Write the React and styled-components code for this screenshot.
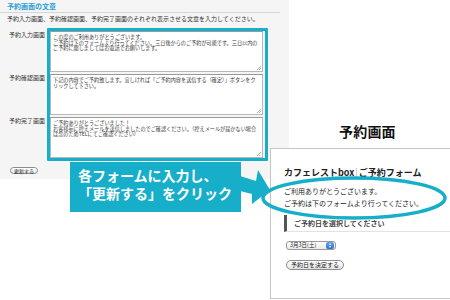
import React from 'react';
import styled, { createGlobalStyle } from 'styled-components';

const cyan = '#17aeca';
const jp = '"Noto Sans CJK JP", "Noto Sans", sans-serif';

const GlobalStyle = createGlobalStyle`
  html, body {
    margin: 0;
    padding: 0;
    background: #fff;
  }
  body {
    font-family: ${jp};
  }
`;

const Canvas = styled.div`
  position: relative;
  width: 450px;
  height: 300px;
  overflow: hidden;
  background: #fff;
`;

/* 管理画面 (left) */
const AdminPage = styled.div`
  box-sizing: border-box;
  width: 289px;
  height: 179px;
  padding: 0 9px 0 0;
  background: #f5f5f5;
  color: #333;
`;

const SectionTitle = styled.div`
  padding: 2px 0 2px 7px;
  border-bottom: 1px solid #d6d6d6;
  color: #2a9ed6;
  font-size: 7px;
  line-height: 8px;
  font-weight: bold;
`;

const Intro = styled.p`
  margin: 2px 0 0;
  padding-left: 7px;
  font-size: 6px;
  line-height: 7px;
  white-space: nowrap;
`;

const FormArea = styled.div`
  display: flex;
  margin-top: 6px;
  padding-left: 7px;
`;

const LabelCol = styled.div`
  display: flex;
  flex-direction: column;
  width: 40px;
  padding-top: 3.5px;
`;

const Label = styled.div`
  height: 43px;
  padding-right: 2px;
  text-align: right;
  font-size: 6px;
  line-height: 6px;
  white-space: nowrap;
`;

const Highlight = styled.div`
  display: flex;
  flex-direction: column;
  gap: 2px;
  padding: 0 2px 0 0;
  border: 3px solid ${cyan};
  border-radius: 1px;
  background: #f5f5f5;
`;

/* textarea の見た目 */
const Field = styled.div`
  position: relative;
  box-sizing: border-box;
  width: 213px;
  height: 41px;
  padding: 2px 2px 1px;
  border: 1px solid #b8b8b8;
  border-top-color: #999;
  background: #fff;
  color: #3a3a3a;
  font-size: 5.15px;
  line-height: 5.7px;
  white-space: pre;
  overflow: hidden;

  &::after {
    content: '';
    position: absolute;
    right: 1px;
    bottom: 1px;
    width: 4px;
    height: 4px;
    background: linear-gradient(
      135deg,
      transparent 45%,
      #b0b0b0 45%,
      #b0b0b0 55%,
      transparent 55%,
      transparent 75%,
      #b0b0b0 75%,
      #b0b0b0 85%,
      transparent 85%
    );
  }
`;

const PillButton = styled.div`
  display: flex;
  width: fit-content;
  align-items: center;
  justify-content: center;
  box-sizing: border-box;
  height: ${(p) => p.h}px;
  padding: 0 ${(p) => p.px}px;
  margin: ${(p) => p.m};
  border: 1px solid #8c8c8c;
  border-radius: 6px;
  background: linear-gradient(#ffffff, #e4e4e4);
  color: #222;
  font-size: ${(p) => p.fs}px;
  line-height: 1;
  white-space: nowrap;
`;

/* 予約画面 (right) */
const Caption = styled.div`
  position: absolute;
  left: 339px;
  top: 122px;
  font-size: 14px;
  line-height: 18px;
  font-weight: bold;
  color: #111;
  letter-spacing: 0.2px;
`;

const Preview = styled.div`
  position: absolute;
  left: 270px;
  top: 148px;
  box-sizing: border-box;
  width: 200px;
  height: 151px;
  padding: 18px 0 0 13px;
  border: 1px solid #c6c6c6;
  background: #fff;
  color: #222;
`;

const ShopTitle = styled.div`
  font-size: 9px;
  line-height: 11px;
  font-weight: bold;
  white-space: nowrap;

  span {
    color: #aaa;
    font-weight: normal;
    margin: 0 1px;
  }
`;

const Message = styled.p`
  margin: 8px 0 0;
  font-size: 7px;
  line-height: 11.5px;
  white-space: nowrap;
`;

const StepHeading = styled.div`
  margin-top: 6px;
  padding: 2px 0 2px 7px;
  border-left: 3px solid #555;
  border-bottom: 1px solid #e2e2e2;
  font-size: 7px;
  line-height: 12px;
  font-weight: bold;
  color: #444;
  white-space: nowrap;
`;

const SelectBox = styled.div`
  display: flex;
  align-items: center;
  justify-content: space-between;
  box-sizing: border-box;
  width: 50px;
  height: 9px;
  margin: 9px 0 0 2px;
  padding: 0 1px 0 3px;
  border: 1px solid #9a9a9a;
  border-radius: 3px;
  background: linear-gradient(#fff, #e9e9e9);
  font-size: 5.5px;
  line-height: 1;
  color: #222;
`;

const Stepper = styled.span`
  display: flex;
  flex-direction: column;
  align-items: center;
  justify-content: center;
  gap: 1px;
  width: 8px;
  height: 7px;
  border-radius: 2px;
  background: linear-gradient(#6aa6f0, #2f6fd6);

  i {
    width: 0;
    height: 0;
    border-left: 1.5px solid transparent;
    border-right: 1.5px solid transparent;
  }
  i:first-child {
    border-bottom: 2px solid #fff;
  }
  i:last-child {
    border-top: 2px solid #fff;
  }
`;

const ButtonRow = styled.div`
  margin: 10px 0 0 2px;
`;

/* 注釈 */
const Callout = styled.div`
  position: absolute;
  left: 70px;
  top: 162px;
  box-sizing: border-box;
  width: 171px;
  height: 50px;
  padding: 4px 0 0 8px;
  background: ${cyan};
  color: #fff;
  font-size: 14px;
  line-height: 18px;
  font-weight: bold;
  white-space: nowrap;
`;

const Overlay = styled.svg`
  position: absolute;
  left: 0;
  top: 0;
  pointer-events: none;
`;

const fields = [
  {
    label: '予約入力画面',
    text: 'この度のご利用ありがとうございます。\nご予約は下のフォームより行ってください。三日後からのご予約が可能です。三日以内の\nご予約に関しましてはお電話でお願いします。',
  },
  {
    label: '予約確認画面',
    text: '下記の内容でご予約致します。宜しければ「ご予約内容を送信する（確定）」ボタンをク\nリックして下さい。',
  },
  {
    label: '予約完了画面',
    text: 'ご予約ありがとうございました！\nお客様宛に控えメールを送信しましたのでご確認ください。（控えメールが届かない場合\nは念のためTELにてご確認ください）',
  },
];

export default function App() {
  return (
    <Canvas>
      <GlobalStyle />
      <AdminPage>
        <SectionTitle>予約画面の文章</SectionTitle>
        <Intro>予約入力画面、予約確認画面、予約完了画面のそれぞれ表示させる文章を入力してください。</Intro>
        <FormArea>
          <LabelCol>
            {fields.map((f) => (
              <Label key={f.label}>{f.label}</Label>
            ))}
          </LabelCol>
          <Highlight>
            {fields.map((f) => (
              <Field key={f.label} role="textbox" aria-multiline="true">
                {f.text}
              </Field>
            ))}
          </Highlight>
        </FormArea>
        <PillButton h={7} px={3} fs={5} m="6px 0 0 10px">更新する</PillButton>
      </AdminPage>

      <Caption>予約画面</Caption>
      <Preview>
        <ShopTitle>カフェレストbox<span>|</span>ご予約フォーム</ShopTitle>
        <Message>
          ご利用ありがとうございます。
          <br />
          ご予約は下のフォームより行ってください。
        </Message>
        <StepHeading>ご予約日を選択してください</StepHeading>
        <SelectBox>
          3月3日(土)
          <Stepper>
            <i />
            <i />
          </Stepper>
        </SelectBox>
        <ButtonRow>
          <PillButton h={10} px={4} fs={6} m="0">予約日を決定する</PillButton>
        </ButtonRow>
      </Preview>

      <Callout>
        各フォームに入力し、
        <br />
        「更新する」をクリック
      </Callout>

      <Overlay width="450" height="300" viewBox="0 0 450 300">
        <polygon
          points="240,176 256,181 258,170 270,190 252,204 252,194 240,191"
          fill={cyan}
        />
        <ellipse cx="354" cy="198" rx="91" ry="20" fill="none" stroke={cyan} strokeWidth="3.5" />
      </Overlay>
    </Canvas>
  );
}
